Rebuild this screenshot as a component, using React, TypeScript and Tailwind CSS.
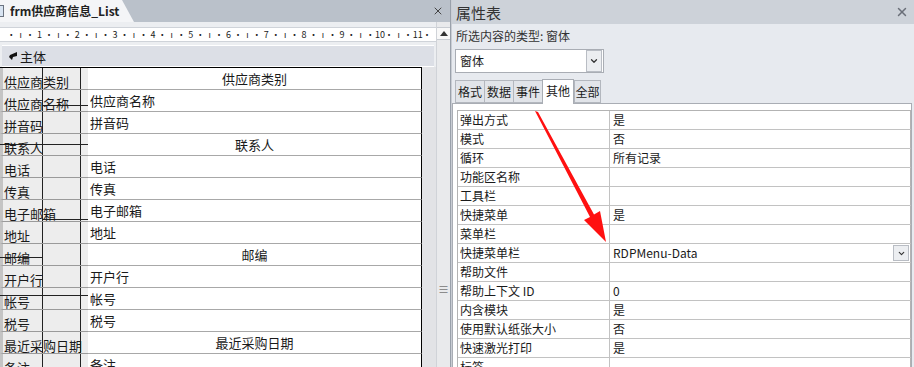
import { X, ChevronDown } from 'lucide-react';

const font = { fontFamily: '"Noto Sans CJK SC", "Noto Sans", sans-serif' };

type Row = { label: string; value: string; center?: boolean; line?: { top: number; left: number; width: number } };

const formRows: Row[] = [
  { label: '供应商类别', value: '供应商类别', center: true },
  { label: '供应商名称', value: '供应商名称', line: { top: 15, left: 42, width: 46 } },
  { label: '拼音码', value: '拼音码' },
  { label: '联系人', value: '联系人', center: true, line: { top: 10, left: 0, width: 88 } },
  { label: '电话', value: '电话' },
  { label: '传真', value: '传真' },
  { label: '电子邮箱', value: '电子邮箱', line: { top: 19, left: 42, width: 46 } },
  { label: '地址', value: '地址' },
  { label: '邮编', value: '邮编', center: true, line: { top: 13, left: 0, width: 42 } },
  { label: '开户行', value: '开户行' },
  { label: '帐号', value: '帐号', line: { top: 7, left: 0, width: 88 } },
  { label: '税号', value: '税号' },
  { label: '最近采购日期', value: '最近采购日期', center: true },
  { label: '备注', value: '备注' },
];

const props: [string, string][] = [
  ['弹出方式', '是'],
  ['模式', '否'],
  ['循环', '所有记录'],
  ['功能区名称', ''],
  ['工具栏', ''],
  ['快捷菜单', '是'],
  ['菜单栏', ''],
  ['快捷菜单栏', 'RDPMenu-Data'],
  ['帮助文件', ''],
  ['帮助上下文 ID', '0'],
  ['内含模块', '是'],
  ['使用默认纸张大小', '否'],
  ['快速激光打印', '是'],
  ['标签', ''],
];

const tabs = [
  { name: '格式', w: 'w-[30px]' },
  { name: '数据', w: 'w-[30px]' },
  { name: '事件', w: 'w-[30px]' },
  { name: '其他', w: 'w-[32px]', active: true },
  { name: '全部', w: 'w-[27px]' },
];

function Ruler() {
  const segs = Array.from({ length: 11 }, (_, i) => i);
  return (
    <div className="h-[15px] mt-[5px] bg-white border-y border-[#cfd3d9] overflow-hidden flex items-center">
      <div className="flex -ml-[3px] text-[9px] leading-[13px] text-[#222]">
        {segs.map((i) => (
          <div key={i} className="w-[37.8px] shrink-0 flex">
            <span className="w-[9.45px] text-center">{i === 0 ? '' : i}</span>
            <span className="w-[9.45px] text-center">·</span>
            <span className="w-[9.45px] text-center">ı</span>
            <span className="w-[9.45px] text-center">·</span>
          </div>
        ))}
        <span className="w-[9.45px] text-center">11</span>
        <span className="w-[9.45px] text-center">·</span>
      </div>
    </div>
  );
}

export default function App() {
  return (
    <div className="w-[914px] h-[367px] overflow-hidden flex bg-[#bac1ca] relative text-[#1a1a1a]" style={font}>
      {/* left: form design view */}
      <div className="w-[451px] flex flex-col border-r border-[#9aa1ab]">
        <div className="h-[22px] flex items-end relative shrink-0">
          <div className="h-[22px] w-[134px] bg-[#f4f5f7] [clip-path:polygon(0_0,122px_0,134px_100%,0_100%)] flex items-center">
            <div className="w-[5px] h-[12px] border border-[#6b7380] bg-[#d8e4f2] ml-[-1px]" />
            <span className="ml-[6px] text-[12px] font-bold leading-none text-[#222] whitespace-nowrap">frm供应商信息_List</span>
          </div>
          <X size={12} strokeWidth={2} className="absolute right-[6px] top-[5px] text-[#444]" />
        </div>
        <div className="flex flex-1 min-h-0">
          <div className="w-[436px] flex flex-col bg-[#eceef1]">
            <div className="h-[23px] shrink-0 overflow-hidden">
              <Ruler />
            </div>
            <div className="h-[22px] shrink-0 bg-[#dcdfe6] border-t border-white border-b border-[#9ea4ae] flex items-center mx-[2px]">
              <svg width="10" height="10" viewBox="0 0 10 10" className="ml-[6px]">
                <path d="M9 1 L2 4 L1 6 L4 9 L5 6 L9 5 Z" fill="#111" />
              </svg>
              <span className="ml-[2px] text-[13px] leading-none">主体</span>
            </div>
            <div className="flex flex-1">
              <div className="w-[422px] border-t border-black">
                {formRows.map((r) => (
                  <div key={r.label} className="h-[22px] flex">
                    <div className="w-[88px] relative bg-[#ededed] border-b border-[#9a9a9a] border-l-[3px] border-l-[#c4c4c4]">
                      <div className="absolute left-[39px] top-0 bottom-0 w-px bg-[#222]" />
                      <div className="absolute left-[77px] top-0 bottom-0 w-px bg-[#222]" />
                      {r.line && (
                        <div
                          className="absolute h-px bg-[#222]"
                          style={{ top: r.line.top, left: r.line.left - 3, width: r.line.width }}
                        />
                      )}
                      <span className="relative pl-[1px] text-[13px] leading-[21px] whitespace-nowrap">{r.label}</span>
                    </div>
                    <div
                      className={`flex-1 bg-white border-b border-[#a8a8a8] border-r border-r-black text-[13px] leading-[21px] ${
                        r.center ? 'text-center' : 'pl-[2px]'
                      }`}
                    >
                      {r.value}
                    </div>
                  </div>
                ))}
              </div>
              <div className="flex-1 bg-[#e2e3e6]" />
            </div>
          </div>
          <div className="w-[14px] flex flex-col bg-[#e9eaec] border-l border-[#d0d3d8]">
            <div className="h-[13px] mt-[5px] bg-[#f8f8f8] border-y border-[#c8ccd2] flex items-center justify-center">
              <svg width="8" height="5" viewBox="0 0 8 5">
                <path d="M0 5 L4 0 L8 5 Z" fill="#333" />
              </svg>
            </div>
            <div className="flex-1 pt-[244px] text-center text-[11px] leading-none text-[#777]">≡</div>
          </div>
        </div>
      </div>

      {/* right: property sheet */}
      <div className="flex-1 flex flex-col bg-[#e7eaef] border-l border-[#c9cdd4]">
        <div className="h-[24px] shrink-0 bg-[#cdd2d9] flex items-center justify-between pl-[4px] pr-[5px]">
          <span className="text-[15px] leading-none text-[#333]">属性表</span>
          <X size={14} strokeWidth={2.5} className="text-[#6a6f78]" />
        </div>
        <div className="pl-[4px] mt-[4px] text-[12px] leading-[16px] text-[#333]">所选内容的类型: 窗体</div>
        <div className="ml-[3px] mt-[5px] w-[149px] h-[26px] bg-white border border-[#a9adb4] flex items-center">
          <span className="flex-1 pl-[4px] text-[12px]">窗体</span>
          <div className="w-[16px] h-[22px] mr-[1px] bg-[#eceef1] border border-[#b9bdc4] flex items-center justify-center">
            <ChevronDown size={10} strokeWidth={3} className="text-[#333]" />
          </div>
        </div>
        <div className="flex items-end ml-[3px] mt-[5px] h-[25px]">
          {tabs.map((t) =>
            t.active ? (
              <div key={t.name} className={`${t.w} h-[25px] bg-white border border-[#a9adb4] border-b-0 text-[12px] text-center leading-[22px] whitespace-nowrap relative top-px`}>
                {t.name}
              </div>
            ) : (
              <div key={t.name} className={`${t.w} h-[23px] bg-[#e1e4e9] border border-[#b3b7be] text-[12px] text-center leading-[22px] whitespace-nowrap -mr-px`}>
                {t.name}
              </div>
            ),
          )}
        </div>
        <div className="flex-1 bg-white border border-[#a9adb4] mr-[2px] pt-[6px] pl-[4px]">
          <div className="border-t border-l border-[#b3b3b3]">
            {props.map(([k, v]) => (
              <div key={k} className="h-[19px] flex border-b border-[#c2c2c2] text-[12px] leading-[18px]">
                <div className="w-[152px] pl-[2px] border-r border-[#c2c2c2] whitespace-nowrap">{k}</div>
                <div className="flex-1 pl-[3px] flex items-center border-r border-[#b3b3b3]">
                  <span className="flex-1">{v}</span>
                  {k === '快捷菜单栏' && (
                    <div className="w-[16px] h-[16px] mr-px bg-[#eceef1] border border-[#b9bdc4] flex items-center justify-center">
                      <ChevronDown size={9} strokeWidth={3} className="text-[#333]" />
                    </div>
                  )}
                </div>
              </div>
            ))}
          </div>
        </div>
      </div>

      {/* red annotation arrow */}
      <svg className="absolute left-0 top-0 pointer-events-none" width="914" height="367">
        <polygon points="535,111 538,112 594,214.5 600,211 606,242 584,220 590,217" fill="#ff1010" />
      </svg>
    </div>
  );
}
